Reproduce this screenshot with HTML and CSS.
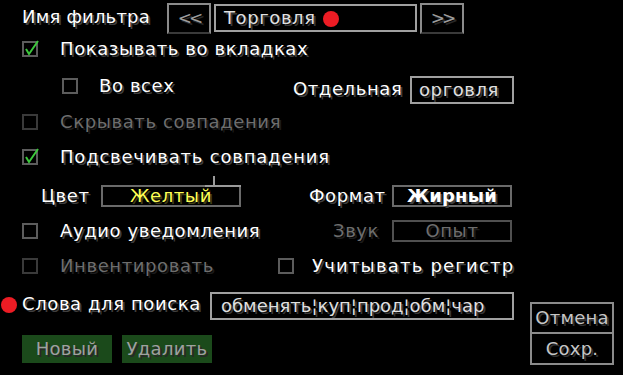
FILE: index.html
```html
<!DOCTYPE html>
<html lang="ru">
<head>
    <meta charset="UTF-8">
    <meta name="viewport" content="width=device-width, initial-scale=1.0">
    <title>Фильтр чата</title>
    <link rel="stylesheet" href="styles.css">
</head>
<body>
  <div class="screen">

    <div class="row row-name">
      <span class="label name-label">Имя фильтра</span>
      <div class="arrow-btn prev">&lt;&lt;</div>
      <div class="field name-field">Торговля<span class="marker name-marker"></span></div>
      <div class="arrow-btn next">&gt;&gt;</div>
    </div>

    <div class="row row-tabs">
      <span class="box on"><svg viewBox="0 0 18 18" width="18" height="18"><polyline points="3,9 6,14 15,1" /></svg></span>
      <span class="label">Показывать во вкладках</span>
    </div>

    <div class="row row-all">
      <span class="box"></span>
      <span class="label all-label">Во всех</span>
      <span class="label sep-label">Отдельная</span>
      <div class="field tab-field">орговля</div>
    </div>

    <div class="row row-hide">
      <span class="box dim"></span>
      <span class="label dim">Скрывать совпадения</span>
    </div>

    <div class="row row-light">
      <span class="box on"><svg viewBox="0 0 18 18" width="18" height="18"><polyline points="3,9 6,14 15,1" /></svg></span>
      <span class="label light-label">Подсвечивать совпадения</span>
    </div>

    <div class="row row-color">
      <span class="label color-label">Цвет</span>
      <div class="select color-select"><span class="yellow">Желтый</span></div>
      <span class="label format-label">Формат</span>
      <div class="select format-select"><span class="bold">Жирный</span></div>
    </div>

    <div class="row row-audio">
      <span class="box"></span>
      <span class="label audio-label">Аудио уведомления</span>
      <span class="label dim sound-label">Звук</span>
      <div class="select dim-select"><span class="dim">Опыт</span></div>
    </div>

    <div class="row row-invert">
      <span class="box dim"></span>
      <span class="label dim invert-label">Инвентировать</span>
      <span class="box"></span>
      <span class="label case-label">Учитывать регистр</span>
    </div>

    <div class="bottom">
      <div class="bottom-left">
        <div class="row row-words">
          <span class="label words-label"><span class="marker words-marker"></span>Слова для поиска</span>
          <div class="field words-field">обменять¦куп¦прод¦обм¦чар</div>
        </div>
        <div class="row row-actions">
          <div class="green-btn">Новый</div>
          <div class="green-btn">Удалить</div>
        </div>
      </div>
      <div class="bottom-right">
        <div class="gray-btn">Отмена</div>
        <div class="gray-btn">Сохр.</div>
      </div>
    </div>

  </div>
</body>
</html>
```

FILE: styles.css
```css
* {
    box-sizing: border-box;
}

body {
    margin: 0;
    background: #000;
    color: #fff;
    font-family: "DejaVu Sans", "Noto Sans", sans-serif;
    font-size: 18px;
    line-height: 20px;
    letter-spacing: 0.6px;
}

.screen {
    width: 623px;
    height: 375px;
    padding: 2px 0 0 22px;
}

.row {
    display: flex;
    align-items: center;
}

.label {
    white-space: nowrap;
    text-shadow: 2px 2px 0 #3f3f3f;
}

.label.dim,
span.dim {
    color: #6e6e6e;
    text-shadow: 2px 2px 0 #1b1b1b;
}

/* checkboxes */
.box {
    position: relative;
    flex-shrink: 0;
    width: 16px;
    height: 16px;
    border: 2px solid #5c5c5c;
    margin-right: 22px;
}

.box.dim {
    border-color: #3a3a3a;
}

.box svg {
    position: absolute;
    left: -1px;
    top: -3px;
    fill: none;
    stroke: #3cc83c;
    stroke-width: 2;
}

/* row 1 */
.row-name {
    height: 32px;
}

.name-label {
    width: 145px;
    margin-top: -3px;
    letter-spacing: 0.2px;
}

.arrow-btn {
    width: 44px;
    height: 31px;
    border: 2px solid #8b8b8b;
    border-bottom-color: #3a3a3a;
    color: #9c9c9c;
    text-align: center;
    line-height: 26px;
    font-size: 17px;
    letter-spacing: -3px;
    text-shadow: 2px 2px 0 #272727;
}

.field {
    border: 2px solid #a0a0a0;
    color: #e0e0e0;
    text-shadow: 2px 2px 0 #383838;
    white-space: nowrap;
    overflow: hidden;
}

.name-field {
    position: relative;
    width: 203px;
    height: 28px;
    margin: 0 3px;
    padding: 2px 0 0 8px;
}

.marker {
    position: absolute;
    width: 16px;
    height: 16px;
    border-radius: 50%;
    background: #ed1c24;
}

.name-marker {
    left: 107px;
    top: 5px;
}

/* checkbox rows */
.row-tabs {
    height: 18px;
    margin-top: 6px;
}

.row-all {
    height: 29px;
    margin-top: 17px;
    padding-left: 40px;
}

.row-all .box {
    margin-right: 21px;
    margin-bottom: 8px;
}

.all-label {
    width: 194px;
    margin-bottom: 8px;
}

.sep-label {
    width: 117px;
    margin-bottom: 2px;
}

.tab-field {
    width: 104px;
    height: 28px;
    padding: 2px 0 0 7px;
}

.row-hide {
    height: 18px;
    margin-top: 9px;
}

.row-light {
    height: 18px;
    margin-top: 17px;
}

.light-label {
    letter-spacing: 0.8px;
}

/* colour / format */
.row-color {
    height: 32px;
    margin-top: 9px;
    padding-left: 19px;
    padding-top: 9px;
}

.color-label {
    width: 60px;
}

.select {
    position: relative;
    height: 22px;
    border: 2px solid #6a6a6a;
    text-align: center;
    line-height: 17px;
}

.color-select {
    width: 140px;
}

.color-select::before {
    content: "";
    position: absolute;
    top: -2px;
    right: -2px;
    width: 36px;
    height: 2px;
    background: #9a9a9a;
}

.color-select::after {
    content: "";
    position: absolute;
    top: -11px;
    left: 110px;
    width: 2px;
    height: 9px;
    background: #9a9a9a;
}

.yellow {
    color: #ffff55;
    text-shadow: 2px 2px 0 #3f3f15;
}

.format-label {
    width: 83px;
    margin-left: 68px;
}

.format-select {
    width: 120px;
}

.bold {
    font-weight: bold;
    letter-spacing: 0.2px;
    text-shadow: 2px 2px 0 #3f3f3f;
}

.row-audio {
    height: 23px;
    margin-top: 12px;
}

.audio-label {
    width: 273px;
}

.sound-label {
    width: 59px;
}

.dim-select {
    width: 120px;
    border-color: #505050;
}

.row-invert {
    height: 18px;
    margin-top: 15px;
}

.invert-label {
    width: 218px;
}

.row-invert .box + .label + .box {
    margin-right: 18px;
}

.case-label {
    letter-spacing: 1.2px;
}

/* bottom part */
.bottom {
    display: flex;
    margin-top: 16px;
    margin-left: -22px;
}

.bottom-left {
    width: 514px;
    padding-left: 22px;
}

.row-words {
    height: 29px;
}

.words-label {
    position: relative;
    width: 188px;
    margin-top: -3px;
}

.words-marker {
    left: -21px;
    top: 3px;
}

.words-field {
    width: 304px;
    height: 28px;
    padding: 2px 0 0 9px;
    letter-spacing: 0;
}

.row-actions {
    gap: 10px;
    margin-top: 15px;
}

.green-btn {
    width: 90px;
    height: 28px;
    background: #1b4a1b;
    color: #a0a0a0;
    text-align: center;
    line-height: 28px;
    letter-spacing: 0.3px;
    text-shadow: 2px 2px 0 #282828;
}

.bottom-right {
    display: flex;
    flex-direction: column;
    margin-left: 16px;
    padding-top: 11px;
}

.gray-btn {
    width: 84px;
    height: 32px;
    border: 2px solid #8b8b8b;
    color: #c6c6c6;
    text-align: center;
    line-height: 27px;
    letter-spacing: 0.2px;
    text-shadow: 2px 2px 0 #313131;
}

.gray-btn + .gray-btn {
    height: 31px;
    border-top: 0;
    line-height: 29px;
}
```
